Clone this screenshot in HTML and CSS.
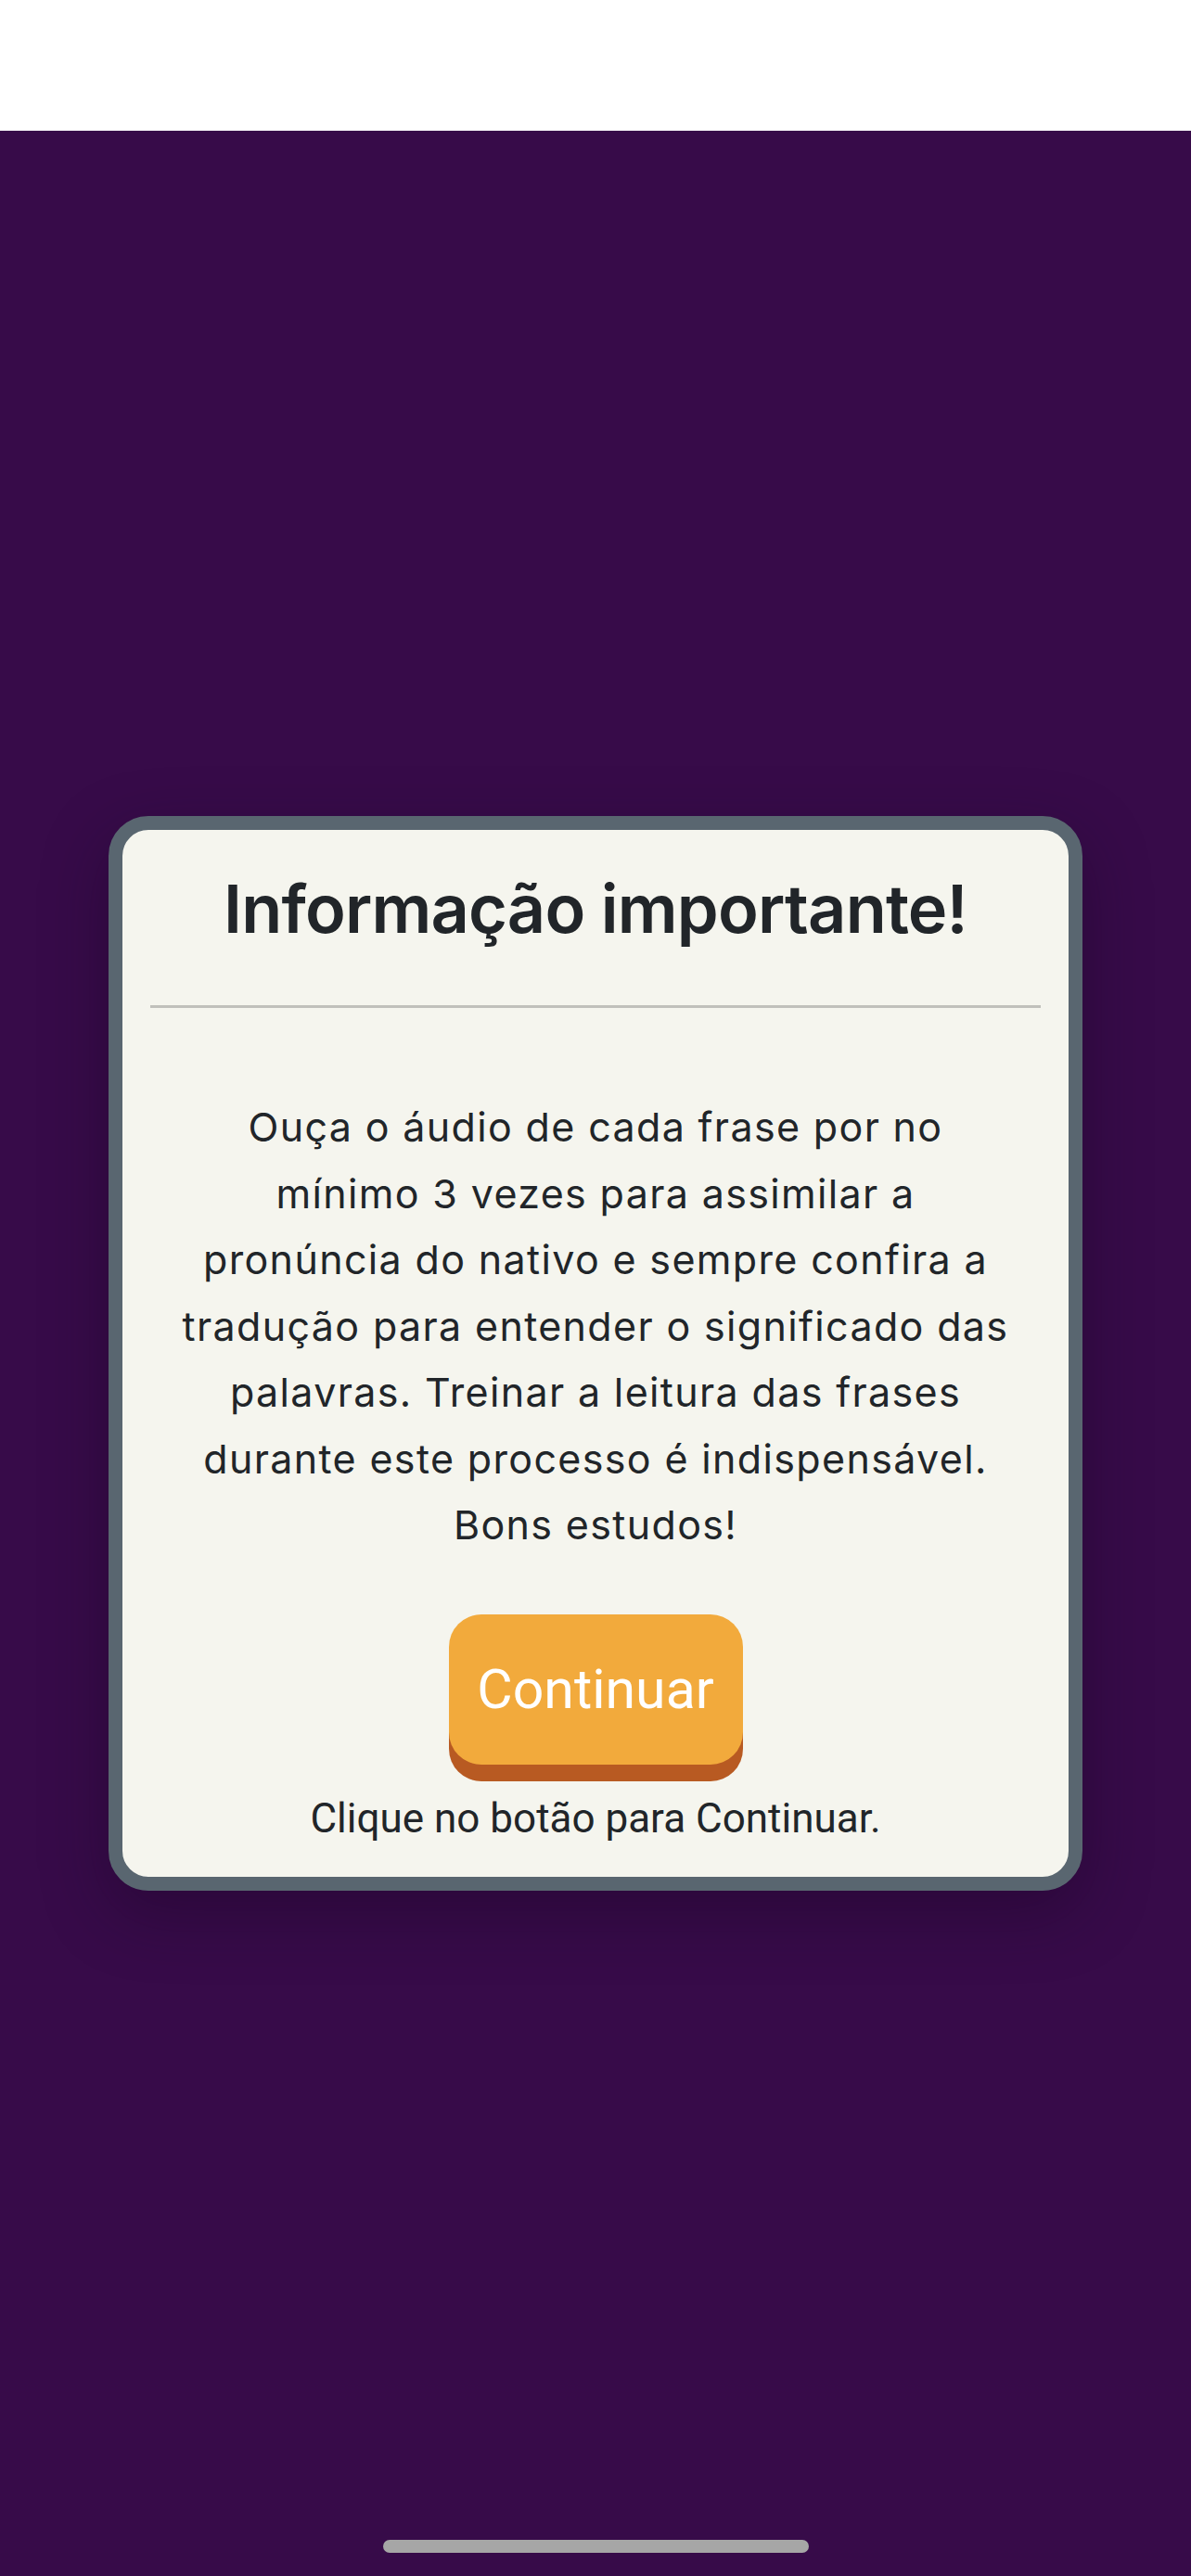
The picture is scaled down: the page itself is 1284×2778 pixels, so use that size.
FILE: index.html
```html
<!DOCTYPE html>
<html lang="pt-BR">
<head>
<meta charset="utf-8">
<title>Informação importante!</title>
<link rel="stylesheet" href="styles.css">
</head>
<body>
<div class="topbar"></div>
<main class="stage">
  <section class="modal">
    <header class="modal-header">
      <h1 class="modal-title">Informação importante!</h1>
    </header>
    <p class="modal-text">Ouça o áudio de cada frase por no<br>mínimo 3 vezes para assimilar a<br>pronúncia do nativo e sempre confira a<br>tradução para entender o significado das<br>palavras. Treinar a leitura das frases<br>durante este processo é indispensável.<br>Bons estudos!</p>
    <div class="modal-actions">
      <button class="btn-continue" type="button">Continuar</button>
      <p class="hint">Clique no botão para Continuar.</p>
    </div>
  </section>
</main>
<div class="home-indicator"></div>
</body>
</html>
```

FILE: styles.css
```css
html, body {
  margin: 0;
  padding: 0;
}
body {
  width: 1284px;
  height: 2778px;
  display: flex;
  flex-direction: column;
  background: #370b49;
  font-family: Inter, "Noto Sans", sans-serif;
  color: #212529;
  position: relative;
  overflow: hidden;
}
.topbar {
  height: 141px;
  background: #ffffff;
  flex: none;
}
.stage {
  flex: 1;
  display: flex;
  align-items: center;
  justify-content: center;
}
.modal {
  box-sizing: border-box;
  width: 1050px;
  border: 15px solid #596670;
  border-radius: 43px;
  background: #f5f5ee;
  padding: 42px 0 37px;
  box-shadow: 0 24px 70px rgba(20, 0, 30, 0.35);
  text-align: center;
}
.modal-header {
  margin: 0 30px;
  padding-bottom: 61px;
  border-bottom: 3px solid #c0c0bb;
}
.modal-title {
  margin: 0;
  font-family: Inter, "Noto Sans", sans-serif;
  font-weight: 600;
  font-size: 72px;
  line-height: 86px;
  letter-spacing: -0.8px;
  color: #212529;
}
.modal-text {
  margin: 93px 20px 0;
  font-size: 43px;
  line-height: 71.5px;
  letter-spacing: 1.35px;
  font-weight: 400;
  color: #212529;
}
.modal-actions {
  margin-top: 60px;
  display: flex;
  flex-direction: column;
  align-items: center;
}
.btn-continue {
  width: 317px;
  height: 162px;
  border: 0;
  border-radius: 35px;
  background: #f2aa3c;
  box-shadow: 0 18px 0 #b85a22;
  color: #ffffff;
  font-family: Roboto, "Liberation Sans", sans-serif;
  font-size: 59px;
  font-weight: 400;
  padding: 0;
}
.hint {
  margin: 32px 0 0;
  font-family: Roboto, "Liberation Sans", sans-serif;
  font-size: 44px;
  line-height: 52px;
  color: #212529;
}
.home-indicator {
  position: absolute;
  left: 413px;
  bottom: 25px;
  width: 459px;
  height: 14px;
  border-radius: 7px;
  background: #a6a6a6;
}
```
